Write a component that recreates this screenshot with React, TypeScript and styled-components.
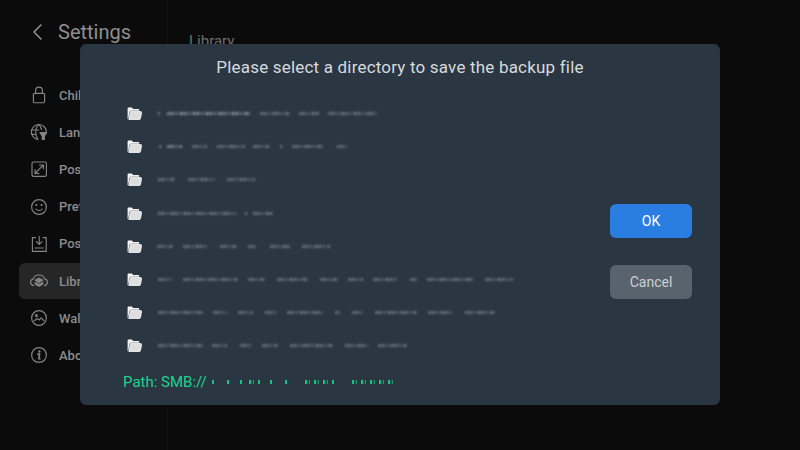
import { ReactNode } from "react";
import styled, { createGlobalStyle } from "styled-components";

const GlobalStyle = createGlobalStyle`
  html, body {
    margin: 0;
    padding: 0;
    background: #0b0b0c;
  }
  body {
    font-family: Roboto, "Liberation Sans", sans-serif;
  }
`;

const IconSvg = ({ children }: { children: ReactNode }) => (
  <svg width="20" height="20" viewBox="0 0 20 20" fill="none" stroke="#858585" strokeWidth="1.15" strokeLinecap="round" strokeLinejoin="round">
    {children}
  </svg>
);

const menu = [
  {
    label: "Child Lock",
    icon: (
      <>
        <rect x="4.4" y="8.3" width="11.2" height="9.4" rx="1.2" />
        <path d="M6.6 8.3V5.5a3.4 3.4 0 0 1 6.8 0v2.8" />
      </>
    ),
  },
  {
    label: "Language",
    icon: (
      <>
        <path d="M8.6 17.4a7.5 7.5 0 1 1 8.8-7.6" />
        <path d="M2.2 8h7.6M2.6 12.4h4M9.4 2.6c-3.2 3.8-3.4 9.6-.6 14.6M10.2 2.6c1.2 1.5 2 3.2 2.3 5" />
        <path d="M11 10.6h6.6l-2.2 3.3v3.4h-2.2v-3.4z" fill="#858585" />
      </>
    ),
  },
  {
    label: "Poster Size",
    icon: (
      <>
        <rect x="3" y="3" width="14.4" height="14.4" rx="1.6" />
        <path d="M6.4 14l7.6-7.6M10.6 6h3.8v3.8M9.8 14.4H6v-3.8" />
      </>
    ),
  },
  {
    label: "Preferences",
    icon: (
      <>
        <circle cx="10" cy="10" r="7.4" />
        <circle cx="7.4" cy="8" r=".5" fill="#858585" />
        <circle cx="12.6" cy="8" r=".5" fill="#858585" />
        <path d="M6.8 12c1.6 2 4.8 2 6.4 0" />
      </>
    ),
  },
  {
    label: "Poster Wall",
    icon: (
      <>
        <path d="M6.4 3.6H3.4v13.8h13.8V3.6h-3" />
        <path d="M10.2 2.4v7.8M7.4 7.6l2.8 2.8 2.8-2.8M6 14h8.4" />
      </>
    ),
  },
  {
    label: "Library",
    selected: true,
    icon: (
      <>
        <path d="M4.6 14.6C2.8 14.2 1.6 12.8 1.6 11.2c0-1.6 1.2-3 2.8-3.3C5 5.6 7.2 4 10 4s5 1.6 5.6 3.9c1.6.3 2.8 1.7 2.8 3.3 0 1.6-1.2 3-3 3.4" />
        <path d="M10 7.2l3.8 2.1-3.8 2.1-3.8-2.1z" fill="#858585" />
        <path d="M6.2 11.4l3.8 2.1 3.8-2.1v1.6L10 15.2 6.2 13z" fill="#858585" />
      </>
    ),
  },
  {
    label: "Wallpaper",
    icon: (
      <>
        <circle cx="10" cy="10" r="7.4" />
        <circle cx="7.4" cy="7.6" r="1" />
        <path d="M5 13l3.3-2.6 2.1 1.6 1.7-2.2 3 3" />
      </>
    ),
  },
  {
    label: "About",
    icon: (
      <>
        <circle cx="10" cy="10" r="7.4" />
        <circle cx="10.4" cy="6.5" r=".6" fill="#858585" />
        <path d="M8.8 9.1h1.8l-.9 4.7h1.3" strokeWidth="1.6" />
      </>
    ),
  },
];

// hidden folder names, each smudge is [x, width] measured from the start of the text
const folders = [
  [[0, 2], [9, 83], [102, 30], [141, 21], [170, 49]],
  [[1, 3], [9, 15], [34, 15], [59, 28], [95, 17], [122, 3], [134, 31], [179, 10]],
  [[0, 17], [30, 27], [69, 28]],
  [[0, 79], [87, 2], [95, 20]],
  [[-1, 16], [25, 25], [62, 17], [90, 9], [112, 20], [144, 28]],
  [[0, 14], [25, 55], [90, 17], [119, 31], [162, 18], [190, 15], [215, 25], [252, 7], [269, 46], [327, 28]],
  [[0, 45], [55, 14], [80, 15], [107, 13], [129, 36], [177, 5], [194, 11], [217, 42], [270, 25], [307, 30]],
  [[0, 45], [54, 15], [82, 12], [104, 16], [132, 43], [187, 23], [220, 29]],
];

const pathSmudges = [[0, 2], [15, 3], [28, 2], [37, 11], [58, 2], [73, 2], [93, 29], [140, 45]];

const place = (row: number[][], i: number) => ({
  marginLeft: i === 0 ? row[i][0] : row[i][0] - row[i - 1][0] - row[i - 1][1],
  width: row[i][1],
});

const App = () => {
  return (
    <>
      <GlobalStyle />
      <S.Page>
        <S.Sidebar>
          <S.SidebarHeader>
            <svg width="12" height="18" viewBox="0 0 12 18" fill="none" stroke="#a0a0a0" strokeWidth="1.4" strokeLinecap="round" strokeLinejoin="round">
              <path d="M10 2L3 9l7 7" />
            </svg>
            <S.SidebarTitle>Settings</S.SidebarTitle>
          </S.SidebarHeader>
          <S.Menu>
            {menu.map((item) => (
              <S.MenuItem key={item.label} $selected={item.selected}>
                <IconSvg>{item.icon}</IconSvg>
                <span>{item.label}</span>
              </S.MenuItem>
            ))}
          </S.Menu>
        </S.Sidebar>

        <S.Content>Library</S.Content>

        <S.Dialog>
          <S.DialogTitle>Please select a directory to save the backup file</S.DialogTitle>
          <S.DialogBody>
            <S.FolderColumn>
              <S.FolderList>
                {folders.map((row, index) => (
                  <S.FolderRow key={index}>
                    <svg width="15" height="13" viewBox="0 0 15 13">
                      <path d="M.6 12V1.6C.6 1 1 .6 1.6.6h3.3l1.2 1.3h5.1c.6 0 1 .4 1 1v.9H3.8c-.6 0-1 .3-1.2.9L1 12.3z" fill="#f4f4f4" />
                      <path d="M3.5 4.6h10.2c.6 0 .9.4.8 1l-1 5.9c-.1.6-.5.9-1 .9H1.8z" fill="#dedede" stroke="#f8f8f8" strokeWidth=".9" />
                    </svg>
                    <S.Smudges>
                      {row.map((_, i) => (
                        <S.Smudge key={i} $strong={index < 2 && i === 1} style={place(row, i)} />
                      ))}
                    </S.Smudges>
                  </S.FolderRow>
                ))}
              </S.FolderList>
              <S.PathRow>
                <S.PathText>Path: SMB://</S.PathText>
                <S.PathSmudges>
                  {pathSmudges.map((_, i) => (
                    <S.PathSmudge key={i} style={place(pathSmudges, i)} />
                  ))}
                </S.PathSmudges>
              </S.PathRow>
            </S.FolderColumn>
            <S.Actions>
              <S.Button $primary>OK</S.Button>
              <S.Button>Cancel</S.Button>
            </S.Actions>
          </S.DialogBody>
        </S.Dialog>
      </S.Page>
    </>
  );
};

const S = {
  Page: styled.div`
    position: relative;
    display: flex;
    width: 800px;
    height: 450px;
    overflow: hidden;
    background: #0b0b0c;
  `,

  Sidebar: styled.aside`
    width: 168px;
    flex-shrink: 0;
    padding: 19px 0 0 19px;
    box-sizing: border-box;
    border-right: 1px solid #121213;
  `,

  SidebarHeader: styled.div`
    display: flex;
    align-items: center;
    gap: 15px;
    height: 26px;
    padding-left: 12px;
  `,

  SidebarTitle: styled.div`
    font-size: 20px;
    line-height: 26px;
    color: #8f8f8f;
  `,

  Menu: styled.div`
    display: flex;
    flex-direction: column;
    gap: 2px;
    margin-top: 32.5px;
  `,

  MenuItem: styled.div<{ $selected?: boolean }>`
    display: flex;
    align-items: center;
    gap: 10px;
    height: 35.2px;
    padding-left: 10px;
    border-radius: 6px;
    background: ${({ $selected }) => ($selected ? "#262627" : "transparent")};
    font-size: 13px;
    font-weight: 500;
    white-space: nowrap;
    color: #8c8c8c;
  `,

  Content: styled.div`
    padding: 32px 0 0 21px;
    font-size: 15px;
    line-height: 18px;
    color: #6f6f6f;
  `,

  Dialog: styled.section`
    position: absolute;
    top: 44px;
    left: 80px;
    display: flex;
    flex-direction: column;
    width: 640px;
    height: 361px;
    border-radius: 6px;
    background: #2b3643;
  `,

  DialogTitle: styled.div`
    margin-top: 12px;
    font-size: 17px;
    line-height: 22px;
    letter-spacing: 0.19px;
    text-align: center;
    color: #d6dadd;
  `,

  DialogBody: styled.div`
    display: flex;
    flex: 1;
    justify-content: space-between;
  `,

  FolderColumn: styled.div`
    display: flex;
    flex-direction: column;
    padding: 26.5px 0 0 43px;
  `,

  FolderList: styled.div`
    display: flex;
    flex-direction: column;
    gap: 15.2px;
  `,

  FolderRow: styled.div`
    display: flex;
    align-items: center;
    gap: 16px;
    height: 18px;
    padding-left: 4px;
  `,

  Smudges: styled.div`
    display: flex;
    align-items: center;
  `,

  Smudge: styled.span<{ $strong?: boolean }>`
    flex-shrink: 0;
    height: 3px;
    border-radius: 2px;
    background: repeating-linear-gradient(90deg, #a9b1b8 0 2px, #4f5a66 2px 3px, #7f8a94 3px 7px, #3e4a56 7px 9px, #99a2aa 9px 10px, #46525e 10px 13px);
    opacity: ${({ $strong }) => ($strong ? 0.85 : 0.6)};
    filter: blur(1px);
  `,

  PathRow: styled.div`
    display: flex;
    align-items: center;
    margin-top: 17px;
  `,

  PathText: styled.span`
    font-size: 15px;
    line-height: 20px;
    color: #1fd28c;
  `,

  PathSmudges: styled.div`
    display: flex;
    align-items: center;
    margin-left: 5px;
  `,

  PathSmudge: styled.span`
    flex-shrink: 0;
    height: 4px;
    background: repeating-linear-gradient(90deg, #1fbf82 0 2px, #2b4a4a 2px 4px, #1a9a6c 4px 5px, transparent 5px 9px);
    filter: blur(0.7px);
  `,

  Actions: styled.div`
    display: flex;
    flex-direction: column;
    gap: 27.5px;
    padding: 125.5px 28px 0 0;
  `,

  Button: styled.div<{ $primary?: boolean }>`
    display: flex;
    align-items: center;
    justify-content: center;
    width: 82px;
    height: 34px;
    border-radius: 6px;
    background: ${({ $primary }) => ($primary ? "#2a7de1" : "#59636e")};
    font-size: 14px;
    color: ${({ $primary }) => ($primary ? "#ffffff" : "#ccd0d4")};
  `,
};

export default App;
